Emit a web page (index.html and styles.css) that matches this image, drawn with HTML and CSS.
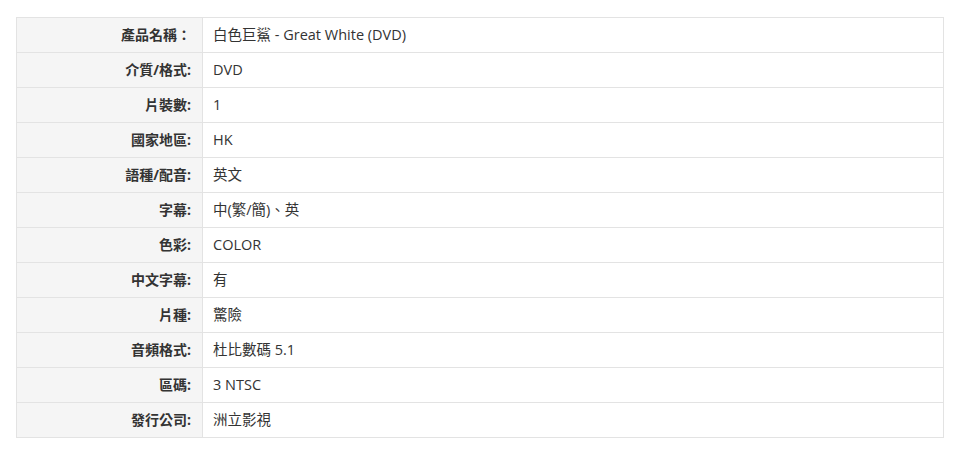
FILE: index.html
```html
<!DOCTYPE html>
<html>
<head>
    <title>產品資料</title>
    <link rel="stylesheet" href="styles.css">
</head>
<body>
    <table class="spec">
        <tr><th>產品名稱：</th><td>白色巨鯊 - Great White (DVD)</td></tr>
        <tr><th>介質/格式:</th><td>DVD</td></tr>
        <tr><th>片裝數:</th><td>1</td></tr>
        <tr><th>國家地區:</th><td>HK</td></tr>
        <tr><th>語種/配音:</th><td>英文</td></tr>
        <tr><th>字幕:</th><td>中(繁/簡)、英</td></tr>
        <tr><th>色彩:</th><td>COLOR</td></tr>
        <tr><th>中文字幕:</th><td>有</td></tr>
        <tr><th>片種:</th><td>驚險</td></tr>
        <tr><th>音頻格式:</th><td>杜比數碼 5.1</td></tr>
        <tr><th>區碼:</th><td>3 NTSC</td></tr>
        <tr><th>發行公司:</th><td>洲立影視</td></tr>
    </table>
</body>
</html>
```

FILE: styles.css
```css
body {
    margin: 0;
    padding: 17px 14px 0 16px;
    background: #fff;
    font-family: "Open Sans", "Noto Sans CJK TC", sans-serif;
    font-size: 14px;
    color: #333;
}
.spec {
    width: 928px;
    border-collapse: collapse;
    border: 1px solid #e3e3e3;
}
.spec tr {
    height: 35px;
}
.spec th,
.spec td {
    border: 1px solid #e3e3e3;
    padding: 0 10px 1px;
    line-height: 20px;
    vertical-align: middle;
}
.spec th {
    width: 164px;
    text-align: right;
    font-weight: bold;
    background: #f5f5f5;
    padding-right: 11px;
}
.spec td {
    text-align: left;
    background: #fff;
    font-size: 14.5px;
}
```
